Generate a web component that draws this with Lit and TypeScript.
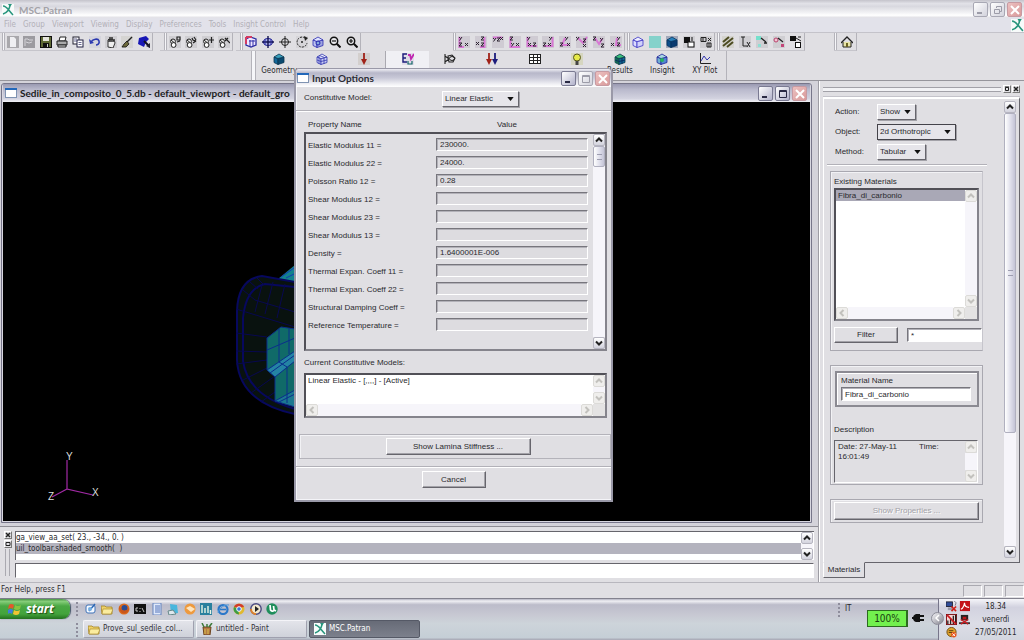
import { LitElement, html, svg, css, nothing, TemplateResult } from "lit";
import { customElement } from "lit/decorators.js";

const INK = "#222";

/* ---- glyph builders, all on a 12x12 grid ---- */
const plate = (fill = "#cfced2") => svg`<rect width="12" height="12" fill=${fill}/>`;
const stroke = (d: string, color = INK, w = 1) =>
  svg`<path d=${d} fill="none" stroke=${color} stroke-width=${w}/>`;
const fill = (d: string, color = INK) => svg`<path d=${d} fill=${color}/>`;

const cube = (front: string, top: string, side: string, line: string) => svg`
  <path d="M1 4 5 5.5 5 11.5 1 9.5z" fill=${front} stroke=${line} stroke-width=".8"/>
  <path d="M5 5.5 11 4 11 9.5 5 11.5z" fill=${side} stroke=${line} stroke-width=".8"/>
  <path d="M1 4 6 1 11 4 5 5.5z" fill=${top} stroke=${line} stroke-width=".8"/>`;

const magnifier = (plus: boolean) => svg`
  <circle cx="5" cy="5" r="3.7" fill="#e9e9ec" stroke="#111" stroke-width="1.5"/>
  ${stroke("M7.8 7.8 11.5 11.5", "#111", 2)}
  ${stroke(plus ? "M3 5H7M5 3V7" : "M3 5H7", "#111", 1.2)}`;

const mouse = (extra: string) => svg`${plate()}
  <circle cx="4" cy="5.4" r="2.4" fill="#eee" stroke="#222"/>
  <circle cx="4.6" cy="9" r="2.4" fill="#fff" stroke="#222"/>
  ${stroke("M2 4 5 6.5", "#222", 1)}${stroke(extra, "#222", 1.2)}`;

const X = (x: number, y: number) => `M${x} ${y}l3 3M${x + 3} ${y}l-3 3`;
const Y = (x: number, y: number) => `M${x} ${y}l1.5 1.5M${x + 3} ${y}l-2.5 3.5`;
const Z = (x: number, y: number) => `M${x} ${y}h3l-3 3h3`;
const viewIcon = (marks: string, axes: string) => svg`${plate("#cfcbd3")}
  ${stroke(axes, "#d878d4", 2)}${stroke(marks, "#2c2430", 1)}`;

const ICONS: Record<string, TemplateResult> = {
  new: svg`${plate("#a9a8ac")}<path d="M3 1h4l2 2v8H3z" fill="#efeff2"/>`,
  open: svg`${plate("#9c9ba0")}${stroke("M2 10V3h3l1 1h4M3 6l3 1 3-1", "#d4d3d8")}`,
  save: svg`<rect x=".5" y=".5" width="11" height="11" fill="#5f6a35" stroke="#111"/><rect x="3" y="1" width="6" height="4" fill="#e6e6dd"/><rect x="3" y="7" width="6" height="4" fill="#111"/><rect x="7" y="8" width="1" height="3" fill="#ccc"/>`,
  print: svg`<path d="M4 1h6L9 5H3z" fill="#fff" stroke="#222"/><path d="M1 5h10v4H1z" fill="#aaa" stroke="#222"/><path d="M2 9h8v2H2z" fill="#ddd" stroke="#222"/>`,
  copy: svg`<rect x="1" y="1" width="6" height="7" fill="#fff" stroke="#223"/><rect x="5" y="4" width="6" height="7" fill="#fff" stroke="#224"/>${stroke("M2 3h3M2 5h3M6.500 6.500h3M6.500 8.500h3", "#447", 0.8)}`,
  undo: svg`${plate("#d5d5dd")}${stroke("M2 6C4 3 9 2 10 5S8 9 7 9", "#2b39b0", 1.6)}${fill("M0 3 5 7 1 8z", "#2b39b0")}`,
  hand: svg`${plate("#cfced2")}<path d="M3 11V4l1-1v3l1-5 1 5 1-5 1 5 1-3 1 4-2 5z" fill="#eee" stroke="#222" stroke-width=".9"/>`,
  broom: svg`${plate("#d5d4d2")}${stroke("M11 1 6 6", "#222", 1.5)}<path d="M6 5 8 8 5 11H1L3 8z" fill="#6d6a3b" stroke="#111" stroke-width=".8"/>`,
  paint: svg`<path d="M1 2 8 0 11 3 8 6 6 11 0 8z" fill="#1717b5"/>${stroke("M6 5 12 11", "#101020", 2)}<path d="M8 10 12 7v5z" fill="#223"/>`,
  m1: mouse("M8 1h3v3H8zM8 6l3-1"),
  m2: mouse("M7 2c1 3 2 3 4 2M9 1l2 3M8 7l3-2"),
  m3: mouse("M7 4h5M9.500 1v6"),
  m4: mouse("M7 2l5 5M7 5l3-3"),
  pick: svg`<path d="M1 3 5 1 11 3V9L6 11 1 9z" fill="#eee6ff" stroke="#2b2ba0" stroke-width="1.300"/>${stroke("M1 1H7M1 1V8", "#d33b63", 2)}${stroke("M4 5h6M5 4v7M8 4v6", "#3131a8")}`,
  fit: svg`<ellipse cx="6" cy="6" rx="4.500" ry="3.500" fill="#aab0ea" stroke="#2b2b9a"/>${stroke("M6 0V12M0 6H12", "#141450", 1.400)}${stroke("M3 3v6M9 3v6", "#2b2b9a")}`,
  target: svg`<circle cx="6" cy="6" r="3.500" fill="none" stroke="#222"/>${stroke("M6 0V12M0 6H12", "#222")}`,
  rotate: svg`${plate("#d6d5d9")}<path d="M9 2A5 5 0 1 0 11 7" fill="none" stroke="#222" stroke-dasharray="2 1"/><circle cx="6" cy="6" r="1" fill="#222"/>${fill("M8 0 12 2 9 5z")}`,
  model: svg`${cube("#bcc2f0", "#dfe3ff", "#9fa5e0", "#2b2bb0")}<circle cx="6" cy="7" r="2" fill="#8ad" stroke="#22a"/>`,
  zout: magnifier(false),
  zin: magnifier(true),
  v1: viewIcon(Y(1, 1) + Z(1, 7) + X(7, 7), "M1.500 1V11H6"),
  v2: viewIcon(X(1, 6) + Z(6, 1) + Z(6, 7), "M9.500 1V11H5"),
  v3: viewIcon(Y(1, 2) + Z(5, 2) + X(8, 1), "M1 1.500H10"),
  v4: viewIcon(Z(1, 1) + Y(2, 7) + X(7, 7), "M1.500 1V11H11"),
  v5: viewIcon(Y(1, 1) + X(2, 7) + Z(7, 7), "M1.500 1V10H11"),
  v6: viewIcon(Z(1, 7) + Y(7, 1) + X(6, 7), "M10.500 1V10H2"),
  v7: viewIcon(Z(1, 7) + X(8, 7) + Y(6, 1), "M6 2 3 9H10"),
  v8: viewIcon(Y(0, 1) + Z(7, 3) + X(7, 8), "M2 2 7 7 11 1"),
  v9: viewIcon(Z(0, 1) + Y(7, 2) + Z(8, 8), "M2 2 6 8 9 3"),
  v10: viewIcon(X(1, 7) + Z(7, 7) + Y(7, 1), "M7 2 6 9H11"),
  wire: cube("#dcdcff", "#eeeeff", "#d2d2fb", "#3a34c4"),
  flat: plate("#85d2cb"),
  solid: svg`${plate("#a3a9ba")}${cube("#0c4e8a", "#2a80ba", "#083a70", "#06335e")}`,
  swap: svg`${plate()}<rect x="1" y="1" width="6" height="6" fill="#111"/><rect x="5" y="6" width="6" height="5" fill="#fff" stroke="#111"/>${stroke("M9 1v4", "#111")}`,
  rows: svg`${plate()}${stroke("M1 1.500h5v4H1zM3 1v5M7 7h4v4H7zM8 2l3 3M8 5l3-3M9 7v4", "#222")}`,
  f1: svg`${plate("#d5d4cf")}${stroke("M1 6 7 1M1 10 11 2M5 11 11 6", "#4d4c22", 2)}`,
  f2: svg`${plate()}${stroke("M2 1h4M4 1v9h4M8 6l3 5M11 6 8 11", "#222")}`,
  f3: svg`${plate()}<rect width="5" height="4" fill="#76e0cc"/><rect x="2" y="8" width="3" height="3" fill="#8de0d4"/>${stroke("M5 2 10 6M8 7h3", "#222", 1.300)}`,
  f4: svg`${plate()}<circle cx="3" cy="4" r="2" fill="#f3c4d4" stroke="#b8436c"/>${stroke("M5 2 10 6", "#222", 1.200)}<rect x="8" y="8" width="3" height="3" fill="#c24578"/>`,
  f5: svg`<rect width="6" height="5" fill="#111"/>${stroke("M6 2 11 5M8 1h3", "#222")}<rect x="5.500" y="6.500" width="5" height="5" fill="#fff" stroke="#111"/>`,
  home: svg`<path d="M2 6v5h8V6" fill="#e8e4a8" stroke="#222"/><path d="M0 7 6 1 12 7" fill="none" stroke="#222" stroke-width="1.300"/><rect x="5" y="7" width="2" height="4" fill="#6b6420"/>`,
  geometry: cube("#14689a", "#3aa0bc", "#0b4a70", "#0a3550"),
  elements: svg`${cube("#d5d8fa", "#eef0ff", "#c9cdf5", "#3438b0")}${stroke("M3 3v8M1 7l4 1.500 6-1.500M8 5v6M3.500 2.500l5 2", "#3438b0", 0.8)}`,
  loads: svg`${plate("#d3cfcd")}${stroke("M6 0V8", "#a02218", 1.800)}${fill("M3 6H9L6 12z", "#a02218")}`,
  materials: svg`${plate("#e0dce8")}${stroke("M5 1H1V9H5M1 5H4", "#1c1c7c", 1.400)}${stroke("M6 2h2l1 4 3-5", "#c027b0", 1.800)}${stroke("M6 8v3h4V8", "#166", 1.200)}`,
  properties: svg`${stroke("M1 1V11M1 3 5 6 1 9M4 3 8 2 11 5 9 9 5 9z", "#222", 1.100)}<ellipse cx="8" cy="5.500" rx="2.500" ry="2" fill="none" stroke="#222"/>`,
  cases: svg`${stroke("M3 0V8", "#a02218", 1.800)}${fill("M0 6H6L3 12z", "#a02218")}${stroke("M9 0V8", "#1c1c7c", 1.800)}${fill("M6 6H12L9 12z", "#1c1c7c")}`,
  fields: svg`<rect x=".5" y="1.500" width="11" height="9" fill="#fff" stroke="#222"/>${stroke("M0 4.500H12M0 7.500H12M4.500 1V11M8.500 1V11", "#222")}`,
  analysis: svg`${plate("#d6d6c0")}<circle cx="6" cy="4.500" r="3.500" fill="#e6ea48" stroke="#55551a"/><rect x="4.500" y="8" width="3" height="4" fill="#444"/>`,
  results: svg`${cube("#1c9c50", "#39c07c", "#126a98", "#0b3a4a")}${stroke("M3 5v5M8 5v6M1 7l4 1.500L11 7", "#0b2f60")}`,
  insight: svg`${cube("#6fb0d0", "#a8d8e0", "#5288d0", "#20209a")}<circle cx="6" cy="7" r="2" fill="#28b060"/>`,
  xyplot: svg`${stroke("M1.500 0V10.500H12", "#222")}${stroke("M2 8 5 3 8 7 11 4", "#3438b0")}`,
  app: svg`<rect width="12" height="12" fill="#f7fbfa"/>${stroke("M1 2C5 2 6 6 11 11M1 10C5 9 8 5 8 0", "#27957d", 1.500)}${fill("M6 0h4L8 3z", "#27957d")}`,
  window: svg`<rect x=".5" y="1.500" width="11" height="9" fill="#fff" stroke="#7f93b2"/><rect x="0" y="1" width="12" height="2" fill="#2368ba"/>`,
  desk: svg`<rect x="1" y="2" width="9" height="8" rx="2" fill="#f4f8ff" stroke="#3f73b8"/>${stroke("M4 8 10 1", "#2a66b4", 1.500)}<circle cx="5" cy="6" r="2" fill="#74afe2"/>`,
  folder: svg`<path d="M0 3h4l1 1h6v7H1z" fill="#efd26a" stroke="#a38324" stroke-width=".8"/><path d="M2 6h10l-2 5H1z" fill="#fbec9e" stroke="#a38324" stroke-width=".6"/>`,
  firefox: svg`<circle cx="6" cy="6" r="5.500" fill="#dd6a1c"/><circle cx="6.500" cy="5" r="3" fill="#2b4c95"/><path d="M1 3C3 8 8 9 11 5 11 12 1 13 1 3z" fill="#c9561a"/>`,
  cmd: svg`<rect y="1" width="12" height="10" fill="#111"/>${stroke("M4 5H2V8H4M6 5v1M6 8v1M8 5l2 4", "#ddd", 0.9)}`,
  doc: svg`<path d="M2 0h8v12H2z" fill="#dfe9fa" stroke="#6483bd"/>${stroke("M4 3h5M4 5h5M4 7h5M4 9h5", "#5575ba")}`,
  note: svg`<path d="M3 1 10 2 11 10 4 11z" fill="#48b6dd"/><path d="M1 8 6 7 9 11 2 12z" fill="#dfe8ee" stroke="#688"/>`,
  orange: svg`<circle cx="6" cy="6" r="5.500" fill="#ee9a3e"/><path d="M2 5 6 3 11 6 7 9z" fill="#fde5bf"/>`,
  chart: svg`<rect width="12" height="12" fill="#29809e"/>${stroke("M2 2v8M5 5v5M8 3v7M10.500 7v4", "#eaf5e6", 1.400)}`,
  ie: svg`<circle cx="6" cy="6.500" r="4.500" fill="none" stroke="#2b78c9" stroke-width="2.200"/>${stroke("M2 6.500H9", "#2b78c9", 1.600)}${stroke("M1 10C2 5 8 1 12 2", "#4a9ae0")}`,
  chrome: svg`<circle cx="6" cy="6" r="5.500" fill="#e0b92f"/><path d="M1 4A5.500 5.500 0 0 1 11 4L6 5z" fill="#d23b2c"/><path d="M1 4A5.500 5.500 0 0 0 6 11.500L5 6z" fill="#3b9c46"/><circle cx="6" cy="6" r="2.300" fill="#3b78d8" stroke="#fff"/>`,
  player: svg`<circle cx="6" cy="6" r="5.200" fill="#f3e9cf" stroke="#4a4a80" stroke-width="1.400"/>${fill("M5 3 9 6 5 9z", "#222")}<path d="M1 6A5 5 0 0 0 6 11" fill="none" stroke="#e0822a" stroke-width="2"/>`,
  utorrent: svg`<circle cx="6" cy="6" r="5.700" fill="#1f8e5c"/>${stroke("M4 2 4.500 7C6 9 8 8 8 7L7.500 3M8 7l2 1", "#fff", 1.700)}`,
  paintapp: svg`<path d="M2 4h8l-1 8H3z" fill="#b57a45" stroke="#6b431e"/>${stroke("M3 4 1 0M6 4V1M8 4 11 0", "#3c7a3a", 1.500)}${stroke("M4 6v5M7 6v5", "#d8c04a")}`,
  net: svg`<rect x="0" y="1" width="7" height="5" fill="#2f4c9a" stroke="#223"/><rect x="2" y="7" width="5" height="3" fill="#99a"/>${stroke("M6 6 11 11M11 6 6 11", "#d22018", 1.800)}${stroke("M9 0l2 2-1 3", "#778")}`,
  pdf: svg`<rect x="1" y="0" width="11" height="11" fill="#c4121a"/>${stroke("M2 9C5 8 6 3 6 2 6 6 9 7 11 7", "#fff", 1.300)}`,
  sig: svg`<rect x=".5" y=".5" width="11" height="11" fill="#f6d6d6" stroke="#7c0d12"/>${stroke("M2 11V7M5 11V5M8 11V2M10.500 11V1", "#222", 1.400)}${stroke("M1 1 11 11", "#cc1a20", 1.800)}`,
  pc: svg`<rect x="2" y="1" width="8" height="6" fill="#222"/><rect x="4" y="3" width="4" height="3" fill="#c0141a"/><path d="M0 9h12v2H0z" fill="#333"/>${stroke("M2 6 10 11M10 6 2 11", "#c81a20", 1.400)}`,
  shield: svg`<circle cx="6" cy="5.500" r="5" fill="#e2a42c" stroke="#6d4a10"/>${stroke("M3 4h5M3 6h4", "#543c10")}<circle cx="8.500" cy="8.500" r="3" fill="#e4541c"/>${stroke("M7 7 10 10M10 7 7 10", "#fff")}`,
};

const icon = (name: string, size = 12) =>
  html`<svg class="ico" width=${size} height=${size} viewBox="0 0 12 12" aria-hidden="true">${ICONS[name]}</svg>`;

type Dir = "up" | "down" | "left" | "right";
const CHEV: Record<Dir, string> = {
  up: "M2 6.500 5 3.500 8 6.500",
  down: "M2 3.500 5 6.500 8 3.500",
  left: "M6.500 2 3.500 5 6.500 8",
  right: "M3.500 2 6.500 5 3.500 8",
};
const arrow = (dir: Dir, off = false) => html`
  <button type="button" class="arrow ${off ? "off" : ""}" aria-label="Scroll ${dir}" ?disabled=${off}>
    <svg width="10" height="10" viewBox="0 0 10 10"><path d=${CHEV[dir]} fill="none" stroke="currentColor" stroke-width="2"/></svg>
  </button>`;

const vbar = (thumb = "", off = false) => html`
  <div class="vbar">${arrow("up", off)}
    <div class="track">${thumb ? html`<div class="thumb ${thumb}"></div>` : nothing}</div>
  ${arrow("down", off)}</div>`;
const hbar = () => html`
  <div class="sunk-foot">
    <div class="hbar">${arrow("left", true)}<div class="track"></div>${arrow("right", true)}</div>
    <div class="corner"></div>
  </div>`;

const caption = (dim: boolean, restore = false, dimMax = false) => html`
  <div class="caps">
    <button class="cap ${dim ? "dim" : ""}" aria-label="Minimize"><svg width="14" height="14"><path d="M3 10h5" stroke="currentColor" stroke-width="2"/></svg></button>
    <button class="cap ${dim || dimMax ? "dim" : ""}" aria-label="Maximize"><svg width="14" height="14">${
      restore
        ? svg`<path d="M5.500 5V3.500h5v5H9M3.500 6.500h5v4h-5z" fill="none" stroke="currentColor"/>`
        : svg`<path d="M3.500 3.500h7v7h-7zM3 4.500h8" fill="none" stroke="currentColor"/>`
    }</svg></button>
    <button class="cap close" aria-label="Close"><svg width="14" height="14"><path d="M3 3 11 11M11 3 3 11" stroke="#fff" stroke-width="2"/></svg></button>
  </div>`;

const combo = (id: string, value: string, cls: string) => html`
  <span class="combo ${cls}">
    <select id=${id}><option>${value}</option></select>
    <svg width="7" height="4" viewBox="0 0 8 5"><path d="M0 0h8L4 5z" fill="#111"/></svg>
  </span>`;

const MENUS = ["File", "Group", "Viewport", "Viewing", "Display", "Preferences", "Tools", "Insight Control", "Help"];

const TOOLBARS: { cls: string; icons: string[] }[] = [
  { cls: "tb-file", icons: ["new", "open", "save", "print", "copy", "undo", "hand", "broom", "paint"] },
  { cls: "tb-mouse", icons: ["m1", "m2", "m3", "m4"] },
  { cls: "tb-view", icons: ["pick", "fit", "target", "rotate", "model", "zout", "zin"] },
  { cls: "tb-axes", icons: ["v1", "v2", "v3", "v4", "v5", "v6", "v7", "v8", "v9", "v10"] },
  { cls: "tb-shade", icons: ["wire", "flat", "solid", "swap", "rows"] },
  { cls: "tb-label", icons: ["f1", "f2", "f3", "f4", "f5"] },
  { cls: "tb-home", icons: ["home"] },
];

/* id, caption, and whether the caption stands clear of the open dialog */
const APPS: [string, string, boolean][] = [
  ["geometry", "Geometry", true], ["elements", "Elements", false], ["loads", "Loads/BCs", false],
  ["materials", "Materials", false], ["properties", "Properties", false], ["cases", "Load Cases", false],
  ["fields", "Fields", false], ["analysis", "Analysis", false],
  ["results", "Results", true], ["insight", "Insight", true], ["xyplot", "XY Plot", true],
];

const PROPERTIES: [string, string][] = [
  ["Elastic Modulus 11 =", "230000."], ["Elastic Modulus 22 =", "24000."], ["Poisson Ratio 12 =", "0.28"],
  ["Shear Modulus 12 =", ""], ["Shear Modulus 23 =", ""], ["Shear Modulus 13 =", ""],
  ["Density =", "1.6400001E-006"], ["Thermal Expan. Coeff 11 =", ""], ["Thermal Expan. Coeff 22 =", ""],
  ["Structural Damping Coeff =", ""], ["Reference Temperature =", ""],
];

const QUICK = ["desk", "folder", "firefox", "cmd", "doc", "note", "orange", "chart", "ie", "chrome", "player", "utorrent"];

@customElement("app-root")
export class AppRoot extends LitElement {
  static styles = css`
    * { box-sizing: border-box; }
    :host {
      display: flex; flex-direction: column; position: relative; min-height: 100vh; overflow: hidden;
      background: #e0dfe3; color: #2a2a2e; font: 8px/10px "Liberation Sans", Arial, sans-serif;
    }
    button, input, select, textarea { font: inherit; color: inherit; margin: 0; border-radius: 0; }
    button { background: none; border: 0; padding: 0; }
    ul { list-style: none; margin: 0; padding: 0; }
    svg { display: block; flex: none; }
    .tahoma { font-family: "DejaVu Sans Condensed", "DejaVu Sans", sans-serif; }

    .titlebar { display: flex; align-items: center; gap: 5px; padding: 0 2px; height: 18px;
      font: 700 10px/14px Lato, "Open Sans", sans-serif; white-space: nowrap; }
    .titlebar h1, .titlebar h2 { font: inherit; margin: 0; flex: 1; overflow: hidden; }
    .main-title { color: #a3a2a8; padding-top: 1px;
      background: linear-gradient(#c4c3cb, #e2e2e8 20%, #d8d8df 35%, #f2f2f5 70%, #fff 85%, #dddce3); }
    .caps { display: flex; gap: 2px; }
    .cap { width: 15px; height: 15px; border: 1px solid #7a7a92; border-radius: 2px; color: #2a2a44; display: grid; place-items: center;
      background: linear-gradient(135deg, #fff, #b2b2cb); overflow: hidden; }
    .cap.dim { border-color: #a8a8b4; color: #9c9ca8; background: linear-gradient(135deg, #fff, #d2d2dc); }
    .cap.close { border-color: #c79aa2; background: linear-gradient(135deg, #ecc0c0, #d99a9a); }

    .menubar { display: flex; align-items: center; height: 14px; padding-left: 4px; gap: 7px; color: #b2b1b8; background: #e2e2ea; white-space: nowrap; }
    .menubar .logo { margin-left: auto; }

    .toolbars { display: flex; height: 19px; border-top: 1px solid #c4c3ca; }
    .tb { display: flex; align-items: center; margin-left: 2px; padding-left: 4px; border-right: 1px solid #b4b3ba; border-bottom: 1px solid #c6c5cb; }
    .grip { align-self: stretch; width: 3px; border: 1px solid #b4b3ba; border-width: 0 1px; background: #f6f6f9; }
    .tb-list { display: flex; flex: 1; }
    .tb-btn { flex: 1; display: grid; place-items: center; }
    .tb-file { width: 151px; padding-left: 0; }
    .tb-mouse { width: 73px; margin-left: 7px; }
    .tb-view { width: 125px; margin-left: 3px; }
    .tb-axes { width: 172px; margin-left: 92px; padding-left: 0; }
    .tb-shade { width: 88px; padding-left: 0; }
    .tb-label { width: 88px; padding-left: 0; }
    .tb-home { width: 23px; margin-left: 29px; padding-left: 0; }

    .apps { display: flex; height: 29px; padding-left: 251px; }
    .apps-list { display: flex; width: 476px; border-right: 1px solid #b4b3ba; }
    .apps-list .grip { margin-right: 2px; width: 5px; }
    .app { flex: 1 0 0; width: 0; display: flex; flex-direction: column; align-items: center; gap: 1px; padding-top: 2px; white-space: nowrap; }
    .app.on { background: #f0f0f4; border-left: 1px solid #aaa9b0; }

    .work { display: flex; flex: 1; border-top: 1px solid #96959c; }
    .left { flex: 1; display: flex; flex-direction: column; border-right: 1px solid #9e9da4; min-width: 0; }
    .mdi { flex: 1; display: flex; padding: 2px 6px 3px 1px; background: #d4d3da; border-bottom: 1px solid #8e8d94; }
    .view { flex: 1; display: flex; flex-direction: column; border: 1px solid #77768a; border-radius: 3px 3px 0 0; background: #d8d7e0; padding: 0 1px 1px; }
    .view-title { gap: 3px; padding: 0 3px 0 2px; background: linear-gradient(#9a9ab2, #b9b9cc 30%, #d2d2df 80%, #f0f0f5); color: #1c1c22; }
    .scene { flex: 1; width: 100%; background: #000; }

    .command { display: flex; gap: 3px; height: 55px; padding: 4px 4px 0 3px; }
    .dock { display: flex; flex-direction: column; align-items: center; gap: 1px; width: 9px; }
    .mini { width: 8px; height: 8px; border: 1px solid; border-color: #fff #777 #777 #fff; display: grid; place-items: center; }
    .dock .bars { flex: 1; width: 5px; border: 1px solid #aaa9b0; border-width: 0 1px; margin-bottom: 6px; }
    .console { flex: 1; display: flex; flex-direction: column; gap: 3px; }
    .log { display: flex; height: 29px; background: #fff; border-left: 1px solid #66656c; border-top: 1px solid #66656c; }
    .log ul { flex: 1; }
    .log li { height: 11px; line-height: 11px; white-space: pre; }
    .log li.sel { background: #b4b3be; }
    .log .vbar { margin-right: 1px; }
    .prompt { width: 100%; height: 15px; border: 1px solid; border-color: #66656c #fff #fff #66656c; background: #fff; outline: 0; }

    .vbar { width: 12px; display: flex; flex-direction: column; }
    .hbar { height: 12px; display: flex; flex: 1; }
    .track { flex: 1; background: #f6f5fa; display: flex; flex-direction: column; }
    .arrow { width: 12px; height: 12px; flex: none; display: grid; place-items: center; border: 1px solid #b6b5c0; border-radius: 2px; background: linear-gradient(#fff, #d3d3de); color: #222; }
    .arrow.off { border-color: #dcdbd8; background: #efeeec; color: #c2c1bd; }
    .thumb { border: 1px solid #b0b0bf; border-radius: 2px; background: linear-gradient(90deg, #fff, #dcdce9 60%, #c4c4d6); display: grid; place-items: center; }
    .thumb::after { content: ""; width: 5px; height: 4px; border: 1px solid #9d9db0; border-width: 1px 0; }
    .thumb.short { height: 21px; }
    .thumb.long { flex: 0 0 74%; }
    .corner { width: 12px; height: 12px; background: #e4e3e3; }

    .side { width: 205px; padding: 4px 4px 4px 3px; display: flex; flex-direction: column; border-left: 1px solid #fff; }
    .side-head { display: flex; align-items: center; gap: 1px; height: 8px; margin-bottom: 4px; }
    .side-head .bars { flex: 1; height: 5px; border: 1px solid #a2a1a8; border-width: 1px 0; margin-right: 1px; background: #f2f2f5; }
    .panel { flex: 1; display: flex; justify-content: space-between; padding: 2px 3px 4px 3px; border: 1px solid; border-color: #fff #66656c #66656c #fff; border-top: 2px solid #fff; box-shadow: 0 -1px 0 #c4c3ca; }
    .form { width: 160px; padding-top: 1px; }
    .form-row { display: grid; grid-template-columns: 42px auto; justify-content: start; align-items: center; height: 20px; padding-left: 8px; }
    .combo { display: grid; align-items: center; height: 16px; }
    .combo > * { grid-area: 1 / 1; }
    .combo svg { justify-self: end; margin-right: 5px; pointer-events: none; }
    .combo select { appearance: none; width: 100%; height: 100%; background: #e6e5ea; border: 1px solid; border-color: #fff #66656c #66656c #fff; box-shadow: 1px 1px 0 #a3a2a8; padding: 0 2px; line-height: 12px; outline: 0; }
    .w-show { width: 39px; } .w-object { width: 79px; } .w-method { width: 49px; } .w-model { width: 77px; }
    .w-object select { border-color: #44434a; }
    .box { border: 1px solid #a9a8b0; box-shadow: inset 1px 1px 0 #f2f2f5; width: 153px; margin-left: 3px; padding: 3px; }
    .rule { border: 0; border-top: 1px solid #b2b1b8; border-bottom: 1px solid #fff; margin: 0; }
    .form .rule { margin: 2px 0 5px; }
    .box-list { height: 180px; padding-top: 4px; border-right-color: #c6c5cc; }
    .lbl { display: block; height: 12px; line-height: 12px; }
    .sunk { border: 2px solid; border-color: #515057 #85848c #85848c #515057; display: flex; flex-direction: column; background: #fff; }
    .sunk-row { display: flex; flex: 1; }
    .sunk-foot { display: flex; }
    .sunk ul { flex: 1; }
    .sunk li { height: 11px; line-height: 11px; padding-left: 2px; }
    .sunk li.sel { background: #a9a8b6; }
    .mat-list { height: 133px; width: 145px; }
    .filter-row { display: flex; gap: 9px; margin-top: 7px; align-items: center; }
    .btn { height: 17px; border: 1px solid; border-color: #fff #66656c #66656c #fff; box-shadow: inset -1px -1px 0 #a3a2a8; text-align: center; }
    .btn:disabled { color: #a3a2a8; text-shadow: 1px 1px 0 #fff; }
    .field { height: 14px; border: 1px solid; border-color: #77767d #fff #fff #77767d; padding: 0 3px; background: #fff; outline: 0; min-width: 0; box-shadow: inset 1px 1px 0 #b2b1b8; }
    .btn-filter { width: 64px; height: 16px; } .filter-row .field { flex: 1; margin-right: -3px; }
    .filter-row { margin-top: 6px; }
    .box-name { margin-top: 14px; height: 120px; }
    .name-frame { margin: 2px 0 17px 1px; height: 36px; padding: 2px 6px 0 4px; border: 2px solid #8b8a92; box-shadow: inset 1px 1px 0 #fff; }
    .name-frame .field { width: 100%; }
    .desc { display: flex; height: 43px; margin-top: 4px; width: 144px; border: 1px solid; border-color: #66656c #fff #fff #66656c; }
    .desc textarea { flex: 1; min-width: 0; border: 0; background: none; resize: none; padding: 1px 3px; outline: 0; overflow: hidden; white-space: pre; }
    .box-props { margin-top: 14px; padding: 2px 3px; height: 24px; }
    .btn-props { width: 145px; height: 18px; }
    .tabs { display: flex; height: 15px; }
    .tab { width: 42px; border: 1px solid; border-color: transparent #66656c #66656c #fff; margin-top: -1px; background: #e0dfe3; padding: 0; }

    .status { display: flex; align-items: center; height: 16px; border-top: 1px solid #b8b7be; padding-left: 1px; gap: 2px; }
    .status p { margin: 0; flex: 1; line-height: 12px; height: 14px; }
    .cell { width: 19px; height: 12px; border: 1px solid; border-color: #aaa9b0 #fff #fff #aaa9b0; }

    .taskbar { display: flex; height: 42px; border-top: 1px solid #83828e;
      background: linear-gradient(#b2b2c0, #f0f0f4 5%, #bcbcca 14%, #c8c9d3 40%, #cdd4da 60%, #c5ced6 94%, #a5a5b2); }
    .start { width: 70px; height: 20px; display: flex; align-items: center; justify-content: center; gap: 5px; border-radius: 0 8px 8px 0;
      color: #fff; font: italic 700 12px/18px "Open Sans", sans-serif; text-shadow: 1px 1px 1px #1c4a14; padding-right: 8px;
      background: linear-gradient(#4a9645, #86cd7a 12%, #4aa844 35%, #43a33c 75%, #23701f); box-shadow: 1px 0 1px #456; }
    .bands { flex: 1; display: flex; flex-direction: column; gap: 2px; padding-left: 5px; }
    .band { display: flex; height: 19px; align-items: center; }
    .dots { width: 4px; height: 15px; margin-right: 4px; background: radial-gradient(circle, #8e8d9c 1px, transparent 1px) 0 0 / 4px 4px; }
    .quick { display: flex; flex: 1; }
    .quick button { width: 16px; height: 16px; display: grid; place-items: center; }
    .quick ul { display: flex; width: 197px; justify-content: space-between; }
    .tasks { gap: 2px; height: 18px; }
    .tasks .dots { margin-right: 2px; }
    .task { width: 111px; height: 18px; display: flex; align-items: center; gap: 3px; padding-left: 4px; border: 1px solid; border-color: #f4f4f8 #9fa0ae #9fa0ae #f4f4f8; border-radius: 2px; background: linear-gradient(#e3e4ea, #cfd2da); white-space: nowrap; color: #33333a; }
    .task.on { background: linear-gradient(#676b77, #7c808c); border-color: #555966; color: #fff; }
    .lang { width: 30px; display: flex; align-items: flex-start; padding-top: 3px; }
    .lang span { margin-top: 2px; }
    .power { display: flex; align-items: center; height: 38px; gap: 4px; padding-right: 1px; }
    .battery { width: 41px; height: 17px; border: 1px solid #2c6a20; background: #72f04e; font-size: 10px; line-height: 15px; text-align: center; color: #183c10; border-right-width: 2px; }
    .tray { width: 86px; display: flex; padding: 1px 9px 0 7px; gap: 4px; border-left: 1px solid #77768a; background: linear-gradient(#f5f5f9, #d2d2df 20%, #dcdde6 60%, #d3d6df); }
    .tray-icons { display: grid; grid-template-columns: 12px 12px; grid-auto-rows: 13px; gap: 0 1px; align-items: center; }
    .clock { flex: 1; display: flex; flex-direction: column; align-items: center; line-height: 13px; white-space: nowrap; }
    .chev { width: 13px; height: 13px; border-radius: 50%; background: linear-gradient(135deg, #f4f4f8, #85858f); color: #fff; display: grid; place-items: center; border: 1px solid #8c8c98; margin: 0 -7px 0 2px; z-index: 1; }

    .dialog { position: absolute; left: 294px; top: 68px; width: 319px; display: flex; flex-direction: column; background: #e0dfe3;
      border: 2px solid #9a99a8; border-top-width: 1px; border-radius: 5px 5px 0 0; box-shadow: inset 1px -1px 0 #f4f4f8; }
    .dlg-title { height: 18px; padding: 0 1px; gap: 3px; border-radius: 4px 4px 0 0; color: #2c2c34;
      background: linear-gradient(#eeeef4, #b7b7c9 22%, #c9c9d8 50%, #f2f2f6 85%, #fff); }
    .dlg-model { display: grid; grid-template-columns: 138px auto; justify-content: start; height: 23px; padding: 4px 0 0 8px; }
    .dlg-model label { line-height: 14px; }
    .dlg-body { padding: 7px 4px 0 8px; }
    .heads { display: grid; grid-template-columns: 189px 1fr; height: 13px; line-height: 12px; padding-left: 4px; }
    .props { height: 219px; background: #e0dfe3; flex-direction: row; }
    .props-grid { flex: 1; padding: 4px 5px 0 2px; }
    .prop { display: grid; grid-template-columns: 128px 1fr; height: 18px; }
    .prop label { line-height: 15px; }
    .prop .field { width: 100%; height: 13px; background: #dddce0; line-height: 10px; }
    .models-lbl { margin-top: 6px; height: 16px; }
    .models { height: 45px; }
    .dlg-strip { margin: 16px 0 7px 3px; padding-left: 6px; height: 25px; border: 1px solid #b4b3ba; box-shadow: inset 1px 1px 0 #f2f2f5; display: grid; place-items: center; }
    .dlg-strip .btn { width: 145px; }
    .dlg-foot { padding: 3px 0 12px; display: grid; place-items: center; }
    .dlg-foot .btn { width: 64px; }
  `;

  private scene() {
    return svg`
      <g transform="translate(-4 -102)">
        <path d="M279 279 296 265V283z" fill="#13828c"/>
        <path d="M282 277 295 268M287 278 295 274" stroke="#1539b4"/>
        <path d="M296 282 262 276Q238 278 238 311V360Q242 404 296 414z" fill="#09120f"/>
        <path d="M296 282 263 276Q239 279 238 311V360Q240 402 296 414" fill="none" stroke="#07085e" stroke-width="2"/>
        <path d="M296 287 266 284Q247 288 244 318V361Q249 396 296 409" fill="none" stroke="#07085e" stroke-width="2"/>
        <path d="M237 309 296 327M237 333 268 337M237 351 268 352M237 364 268 360M244 380 272 366M252 393 276 376M262 402 276 392M244 290 256 300M251 282 259 289M258 278 265 285M256 300 296 312M263 285 256 312M274 282 266 314M286 284 278 318" stroke="#080850" stroke-width="1" fill="none"/>
        <path d="M268 338 282 327 296 329V407L276 401V377L268 370z" fill="#106a68"/>
        <path d="M268 370 296 351V361L276 377z" fill="#2484a4"/>
        <path d="M276 401 296 390V407z" fill="#1c7890"/>
        <path d="M268 338V370L276 377V401L296 407M268 338 282 327 296 329M280 329V362L288 367V403M290 329V354M268 350 296 338M268 370 296 351M271 373 296 355M276 377 296 361M276 401 296 390M280 402 296 394" fill="none" stroke="#0a2e8c" stroke-width="1"/>
        <path d="M68 460V489L94 495M68 489 53 497" stroke="#a22aa6" stroke-width="1.200" fill="none"/>
        <g fill="#ddd" font-family="Liberation Sans" font-size="10">
          <text x="67" y="460">Y</text><text x="93" y="496">X</text><text x="49" y="500">Z</text>
        </g>
      </g>`;
  }

  private sidePanel() {
    return html`
      <aside class="side">
        <div class="side-head"><div class="bars"></div>
          <button class="mini" aria-label="Float"><svg width="6" height="6"><path d="M1.500 1.500h3v3h-3zM1 1h4" fill="none" stroke="#222"/></svg></button>
          <button class="mini" aria-label="Close panel"><svg width="6" height="6"><path d="M1 1 5 5M5 1 1 5" stroke="#222" stroke-width="1.500"/></svg></button>
        </div>
        <div class="panel">
          <form class="form">
            <div class="form-row"><label for="action">Action:</label>${combo("action", "Show", "w-show")}</div>
            <div class="form-row"><label for="object">Object:</label>${combo("object", "2d Orthotropic", "w-object")}</div>
            <div class="form-row"><label for="method">Method:</label>${combo("method", "Tabular", "w-method")}</div>
            <hr class="rule" />
            <div class="box box-list">
              <span class="lbl" id="mats">Existing Materials</span>
              <div class="sunk mat-list">
                <div class="sunk-row"><ul role="listbox" aria-labelledby="mats"><li class="sel" role="option" aria-selected="true">Fibra_di_carbonio</li></ul>${vbar("", true)}</div>
                ${hbar()}
              </div>
              <div class="filter-row"><button type="button" class="btn btn-filter">Filter</button><input class="field" aria-label="Filter" value="*" /></div>
            </div>
            <div class="box box-name">
              <div class="name-frame"><label class="lbl" for="matname">Material Name</label><input id="matname" class="field" value="Fibra_di_carbonio" /></div>
              <label class="lbl" for="desc">Description</label>
              <div class="desc"><textarea id="desc" readonly .value=${"Date: 27-May-11          Time:\n16:01:49"}></textarea>${vbar("", true)}</div>
            </div>
            <div class="box box-props"><button type="button" class="btn btn-props" disabled>Show Properties ...</button></div>
          </form>
          ${vbar("long")}
        </div>
        <div class="tabs"><button class="tab">Materials</button></div>
      </aside>`;
  }

  private dialog() {
    return html`
      <section class="dialog" role="dialog" aria-labelledby="dlg">
        <header class="titlebar dlg-title">${icon("window")}<h2 id="dlg">Input Options</h2>${caption(false, false, true)}</header>
        <div class="dlg-model"><label for="model">Constitutive Model:</label>${combo("model", "Linear Elastic", "w-model")}</div>
        <hr class="rule" />
        <div class="dlg-body">
          <div class="heads"><span>Property Name</span><span>Value</span></div>
          <div class="sunk props">
            <div class="props-grid">
              ${PROPERTIES.map(([name, value], i) => html`
                <div class="prop"><label for="p${i}">${name}</label><input id="p${i}" class="field" readonly .value=${value} /></div>`)}
            </div>
            ${vbar("short")}
          </div>
          <span class="lbl models-lbl" id="cur">Current Constitutive Models:</span>
          <div class="sunk models">
            <div class="sunk-row"><ul role="listbox" aria-labelledby="cur"><li role="option">Linear Elastic - [,,,,] - [Active]</li></ul>${vbar("", true)}</div>
            ${hbar()}
          </div>
        </div>
        <div class="dlg-strip"><button class="btn">Show Lamina Stiffness ...</button></div>
        <hr class="rule" />
        <div class="dlg-foot"><button class="btn">Cancel</button></div>
      </section>`;
  }

  private taskbar() {
    return html`
      <footer class="taskbar tahoma">
        <button class="start">
          <svg width="13" height="13" viewBox="0 0 13 13"><path d="M1 2Q3 0 6 2L5 6Q3 4 0 6z" fill="#e5572b"/><path d="M7 2Q10 4 13 2L12 6Q9 8 6 6z" fill="#86c440"/><path d="M0 7Q3 5 5 7L4 11Q2 9 0 11z" fill="#3f7be0"/><path d="M6 7Q9 9 12 7L11 11Q8 13 5 11z" fill="#f2c432"/></svg>
          start
        </button>
        <div class="bands">
          <div class="band"><div class="dots"></div><nav class="quick"><ul>${QUICK.map((q) => html`<li><button aria-label=${q}>${icon(q)}</button></li>`)}</ul></nav></div>
          <div class="band tasks"><div class="dots"></div>
            <button class="task">${icon("folder")}Prove_sul_sedile_col...</button>
            <button class="task">${icon("paintapp")}untitled - Paint</button>
            <button class="task on">${icon("app")}MSC.Patran</button>
          </div>
        </div>
        <div class="lang"><div class="dots"></div><span>IT</span></div>
        <div class="power">
          <div class="battery">100%</div>
          <svg width="13" height="10" viewBox="0 0 13 10"><path d="M4 1h4v8H4Q1 8 1 5 1 2 4 1zM8 2h4v2H8zM8 6h4v2H8zM0 4h2v2H0z" fill="#111"/></svg>
          <button class="chev" aria-label="Show hidden icons"><svg width="8" height="8"><path d="M5 1 2 4 5 7" fill="none" stroke="#fff" stroke-width="1.500"/></svg></button>
        </div>
        <div class="tray">
          <div class="tray-icons">${["net", "pdf", "sig", "pc", "shield"].map((n) => icon(n, 11))}</div>
          <div class="clock"><div>18.34</div><div>venerdì</div><div>27/05/2011</div></div>
        </div>
      </footer>`;
  }

  render() {
    return html`
      <header class="titlebar main-title">${icon("app")}<h1>MSC.Patran</h1>${caption(true, true)}</header>
      <nav class="menubar tahoma">${MENUS.map((m) => html`<button>${m}</button>`)}<span class="logo">${icon("app", 13)}</span></nav>
      <div class="toolbars">
        ${TOOLBARS.map((t) => html`<div class="tb ${t.cls}"><div class="grip"></div><div class="tb-list">
          ${t.icons.map((n) => html`<button class="tb-btn" aria-label=${n}>${icon(n)}</button>`)}</div></div>`)}
      </div>
      <div class="apps tahoma"><div class="apps-list"><div class="grip"></div>
        ${APPS.map(([id, name, clear]) => html`<button class="app ${id === "materials" ? "on" : ""}" aria-label=${name}>${icon(id)}${clear ? html`<span>${name}</span>` : nothing}</button>`)}
      </div></div>
      <main class="work">
        <div class="left">
          <div class="mdi"><section class="view">
            <header class="titlebar view-title">${icon("window")}<h2>Sedile_in_composito_0_5.db - default_viewport - default_gro</h2>${caption(false)}</header>
            <svg class="scene" role="img" aria-label="Viewport">${this.scene()}</svg>
          </section></div>
          <div class="command">
            <div class="dock">
              <button class="mini" aria-label="Close"><svg width="6" height="6"><path d="M1 1 5 5M5 1 1 5" stroke="#222" stroke-width="1.500"/></svg></button>
              <button class="mini" aria-label="Float"><svg width="6" height="6"><path d="M1 1.500h4v3H1z" fill="none" stroke="#222"/></svg></button>
              <div class="bars"></div>
            </div>
            <div class="console">
              <div class="log tahoma"><ul><li>ga_view_aa_set( 23., -34., 0. )</li><li class="sel">uil_toolbar.shaded_smooth(  )</li></ul>${vbar()}</div>
              <input class="prompt" aria-label="Command" />
            </div>
          </div>
        </div>
        ${this.sidePanel()}
      </main>
      <div class="status tahoma"><p>For Help, press F1</p><div class="cell"></div><div class="cell"></div><div class="cell"></div></div>
      ${this.taskbar()}
      ${this.dialog()}
    `;
  }
}
